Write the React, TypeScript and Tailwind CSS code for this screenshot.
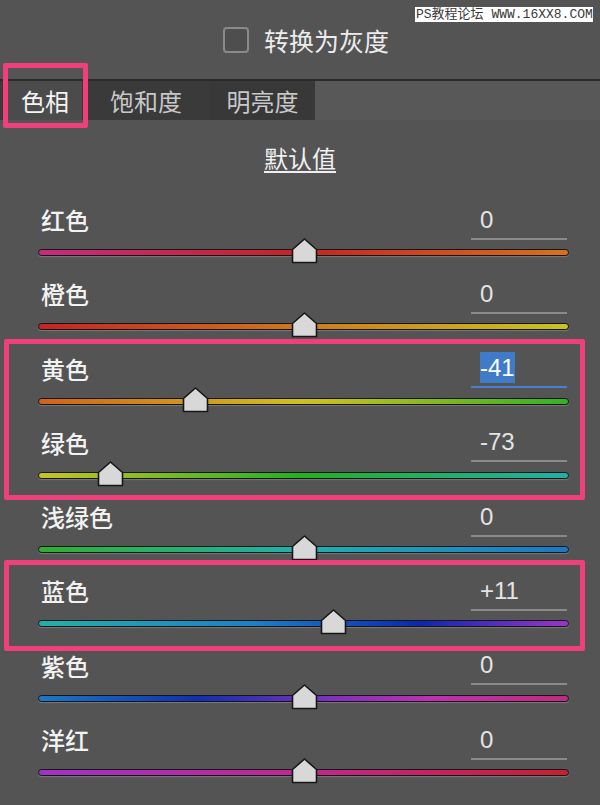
import React from "react";

type Row = { label: string; value: string; v: number; grad: string; active?: boolean };

const rows: Row[] = [
  { label: "红色", value: "0", v: 0, grad: "bg-[linear-gradient(90deg,#c42c80,#c62424_50%,#d8721c)]" },
  { label: "橙色", value: "0", v: 0, grad: "bg-[linear-gradient(90deg,#c42424,#d07a1a_50%,#c8c424)]" },
  { label: "黄色", value: "-41", v: -41, grad: "bg-[linear-gradient(90deg,#d0621a,#d0c020_50%,#34b024)]", active: true },
  { label: "绿色", value: "-73", v: -73, grad: "bg-[linear-gradient(90deg,#c8c424,#22b024_50%,#20b0a8)]" },
  { label: "浅绿色", value: "0", v: 0, grad: "bg-[linear-gradient(90deg,#30b030,#20b0b0_50%,#1c78c8)]" },
  { label: "蓝色", value: "+11", v: 11, grad: "bg-[linear-gradient(90deg,#22b0a8,#1e80c8_40%,#0a28b0_72%,#9c34c8)]" },
  { label: "紫色", value: "0", v: 0, grad: "bg-[linear-gradient(90deg,#1c78c8,#1030b0_30%,#8030c0_55%,#c030b0_75%,#c02a80)]" },
  { label: "洋红", value: "0", v: 0, grad: "bg-[linear-gradient(90deg,#a033c8,#c02890_50%,#c82030)]" },
];

const cjk = "font-['Noto_Sans_CJK_SC','Noto_Sans',sans-serif]";

function Thumb({ v }: { v: number }) {
  const center = 265.5 + (v / 100) * 265.5;
  return (
    <svg
      className="absolute top-[-12px]"
      style={{ left: center - 14 }}
      width="27"
      height="26"
      viewBox="0 0 27 26"
    >
      <polygon
        points="13.5,1 25.5,11.5 25.5,24.5 1.5,24.5 1.5,11.5"
        fill="#d8d8d8"
        stroke="#161616"
        strokeWidth="1.6"
        strokeLinejoin="round"
      />
    </svg>
  );
}

function SliderRow({ row }: { row: Row }) {
  return (
    <div className="flex flex-col h-[74.3px]">
      <div className="flex h-[40px] items-center">
        <span className={`ml-[41px] text-[24px] leading-[32px] font-medium text-[#f2f2f2] ${cjk}`}>{row.label}</span>
        <div
          className={`ml-auto mr-[33px] w-[96px] h-[39px] flex items-center pl-[9px] border-b-2 ${
            row.active ? "border-[#4a7fd0]" : "border-[#8a8a8a]"
          }`}
        >
          <span
            className={`font-['Liberation_Sans',sans-serif] text-[24px] leading-[31px] ${
              row.active ? "bg-[#3f7bc6] text-white" : "text-[#e4e4e4]"
            }`}
          >
            {row.value}
          </span>
        </div>
      </div>
      <div
        className={`relative ml-[38px] mt-[9px] w-[531px] h-[7px] rounded-full border border-[#161616] shadow-[0_1px_1px_rgba(255,255,255,0.22)] ${row.grad}`}
      >
        <Thumb v={row.v} />
      </div>
    </div>
  );
}

export default function App() {
  return (
    <div className="relative w-[600px] h-[805px] overflow-hidden bg-[#545454]">
      {/* header */}
      <div className="flex items-center h-[26px] mt-[27px] ml-[223px] gap-[15px]">
        <div className="w-[26px] h-[26px] rounded-[4px] border-2 border-[#8a8a8a] bg-[#4e4e4e]" />
        <span className={`text-[25px] leading-[32px] text-[#ececec] ${cjk}`}>转换为灰度</span>
      </div>

      {/* tabs */}
      <div className={`flex h-[41px] mt-[26px] bg-[#3a3a3a] border-t-2 border-[#2a2a2a] ${cjk}`}>
        <div className="w-[8px]" />
        <div className="w-[74px] bg-[#4b4b4b] flex items-center justify-center text-[24px] text-[#f4f4f4]">色相</div>
        <div className="w-[128px] flex items-center justify-center text-[24px] text-[#c8c8c8]">饱和度</div>
        <div className="w-[105px] bg-[#383838] flex items-center justify-center text-[24px] text-[#c8c8c8]">明亮度</div>
        <div className="flex-1 bg-[#585858]" />
      </div>

      {/* default */}
      <div className="h-[80px] pt-[22px] flex justify-center">
        <span
          className={`text-[24px] leading-[32px] text-[#f0f0f0] underline decoration-[1.5px] underline-offset-[3px] ${cjk}`}
        >
          默认值
        </span>
      </div>

      {/* sliders */}
      <div className="flex flex-col">
        {rows.map((r) => (
          <SliderRow key={r.label} row={r} />
        ))}
      </div>

      {/* annotations */}
      <div className="absolute left-[3px] top-[63px] w-[85px] h-[65px] border-[5px] border-[#ef3f7c] rounded-[2px]" />
      <div className="absolute left-[4px] top-[339px] w-[581px] h-[161px] border-[5px] border-[#ef3f7c] rounded-[2px]" />
      <div className="absolute left-[4px] top-[560px] w-[581px] h-[91px] border-[5px] border-[#ef3f7c] rounded-[2px]" />

      {/* watermark */}
      <div className="absolute left-[415px] top-[7px] w-[178px] h-[15px] bg-white flex items-center pl-[1px] overflow-hidden">
        <span className="font-['Liberation_Mono','Noto_Sans_CJK_SC',monospace] text-[13px] leading-[15px] text-[#3a3a3a] whitespace-nowrap">
          PS教程论坛 WWW.16XX8.COM
        </span>
      </div>
    </div>
  );
}
